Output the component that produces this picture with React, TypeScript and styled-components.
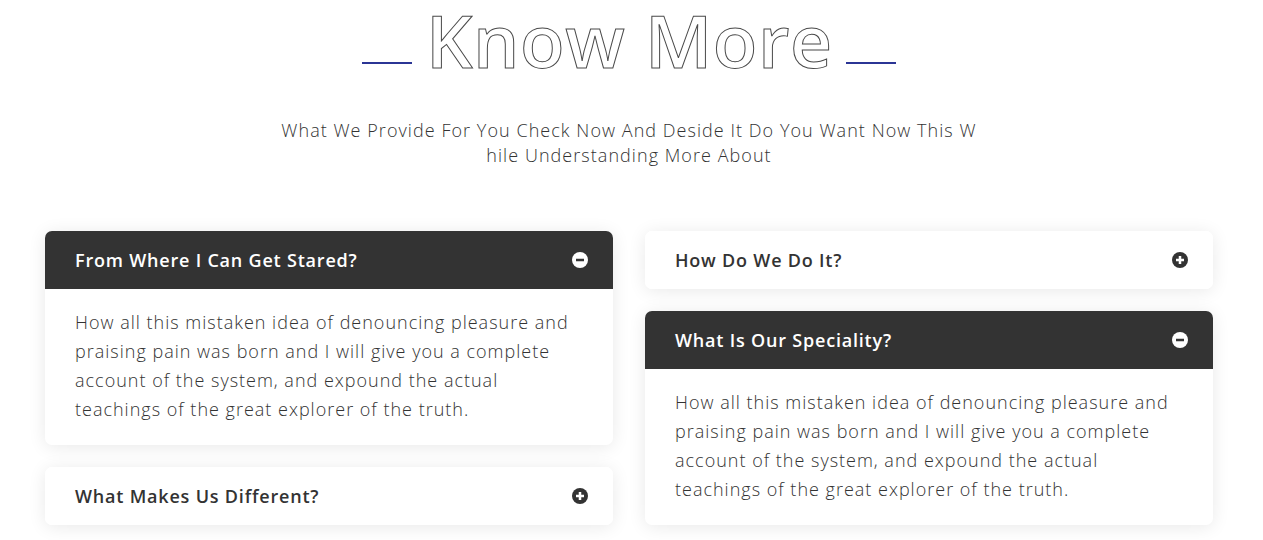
import React from "react";
import styled, { createGlobalStyle } from "styled-components";

const Global = createGlobalStyle`
  html, body { margin: 0; padding: 0; background: #ffffff; }
  body { font-family: "Open Sans", "Noto Sans", sans-serif; color: #333333; }
  * { box-sizing: border-box; }
`;

const Page = styled.div`
  width: 1263px;
  height: 540px;
  overflow: hidden;
  padding-left: 45px;
`;

const Inner = styled.div`
  width: 1168px;
  display: flex;
  flex-direction: column;
  align-items: center;
`;

const TitleRow = styled.div`
  display: flex;
  align-items: flex-end;
  gap: 14px;
  height: 80px;
`;

const Rule = styled.span`
  display: block;
  width: 50px;
  height: 2px;
  background: #2b3595;
  margin-bottom: 16px;
`;

const Title = styled.h1`
  margin: 0 -0.6px 0 0;
  font-family: "Open Sans", "Noto Sans", sans-serif;
  font-weight: 600;
  font-size: 73px;
  line-height: 80px;
  color: #ffffff;
  -webkit-text-stroke: 1px #4a4a4a;
  letter-spacing: 0.6px;
`;

const Subtitle = styled.p`
  margin: 38px 0 0;
  width: 700px;
  text-align: center;
  font-family: "Open Sans", sans-serif;
  font-weight: 300;
  font-size: 18px;
  line-height: 25px;
  letter-spacing: 1.05px;
  color: #333333;
  word-break: break-all;
`;

const Grid = styled.div`
  margin-top: 63px;
  width: 100%;
  display: grid;
  grid-template-columns: 568px 568px;
  column-gap: 32px;
  align-items: start;
`;

const Column = styled.div`
  display: flex;
  flex-direction: column;
  gap: 22px;
`;

const Card = styled.div`
  background: #ffffff;
  border-radius: 7px;
  box-shadow: 0 2px 18px rgba(0, 0, 0, 0.09);
  overflow: hidden;
`;

const Header = styled.div<{ $open: boolean }>`
  height: 58px;
  display: flex;
  align-items: center;
  justify-content: space-between;
  padding: 0 25px 0 30px;
  background: ${(p) => (p.$open ? "#333333" : "#ffffff")};
  color: ${(p) => (p.$open ? "#ffffff" : "#333333")};
`;

const HeaderTitle = styled.span`
  font-family: "Open Sans", sans-serif;
  font-weight: 600;
  font-size: 18px;
  letter-spacing: 0.8px;
`;

const Body = styled.div`
  padding: 19px 30px 21px;
  font-family: "Open Sans", sans-serif;
  font-weight: 300;
  font-size: 18px;
  line-height: 29px;
  letter-spacing: 1px;
  color: #333333;
`;

const Toggle = ({ open }: { open: boolean }) => (
  <svg width="16" height="16" viewBox="0 0 16 16">
    <circle cx="8" cy="8" r="8" fill="currentColor" />
    <rect x="4" y="6.75" width="8" height="2.5" fill={open ? "#333333" : "#ffffff"} />
    {!open && <rect x="6.75" y="4" width="2.5" height="8" fill="#ffffff" />}
  </svg>
);

const text =
  "How all this mistaken idea of denouncing pleasure and praising pain was born and I will give you a complete account of the system, and expound the actual teachings of the great explorer of the truth.";

const Item = ({ title, open }: { title: string; open: boolean }) => (
  <Card>
    <Header $open={open}>
      <HeaderTitle>{title}</HeaderTitle>
      <Toggle open={open} />
    </Header>
    {open && <Body>{text}</Body>}
  </Card>
);

export default function App() {
  return (
    <>
      <Global />
      <Page>
        <Inner>
          <TitleRow>
            <Rule />
            <Title>Know More</Title>
            <Rule />
          </TitleRow>
          <Subtitle>
            What We Provide For You Check Now And Deside It Do You Want Now This While Understanding More About
          </Subtitle>
          <Grid>
            <Column>
              <Item title="From Where I Can Get Stared?" open />
              <Item title="What Makes Us Different?" open={false} />
            </Column>
            <Column>
              <Item title="How Do We Do It?" open={false} />
              <Item title="What Is Our Speciality?" open />
            </Column>
          </Grid>
        </Inner>
      </Page>
    </>
  );
}
